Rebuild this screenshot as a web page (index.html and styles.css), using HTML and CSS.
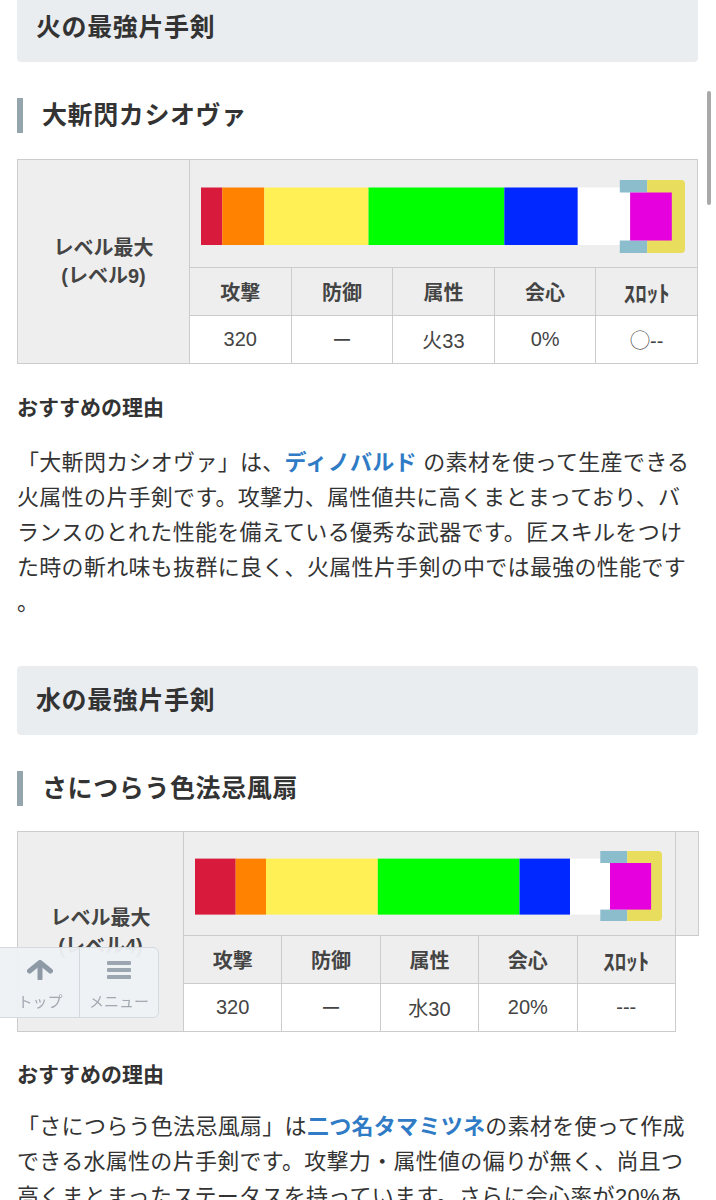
FILE: index.html
```html
<!DOCTYPE html>
<html lang="ja">
<head>
<meta charset="utf-8">
<title>最強片手剣</title>
<link rel="stylesheet" href="styles.css">
</head>
<body>
<main class="page">
  <h2 class="sec-title sec-first">火の最強片手剣</h2>
  <h3 class="weapon-title">大斬閃カシオヴァ</h3>
  <table class="spec">
    <colgroup><col class="c-level-a"><col span="5"></colgroup>
    <tr class="row-bar">
      <th rowspan="3" class="level">レベル最大<br>(レベル9)</th>
      <td colspan="5" class="bar-cell bar-a">
        <svg class="sharp" width="484" height="73" viewBox="0 0 484 73">
          <rect x="0" y="7.5" width="21.2" height="57.5" fill="#d81b3c"/>
          <rect x="21.2" y="7.5" width="42.1" height="57.5" fill="#ff8200"/>
          <rect x="63.3" y="7.5" width="104.2" height="57.5" fill="#fff056"/>
          <rect x="167.5" y="7.5" width="135.8" height="57.5" fill="#00ff00"/>
          <rect x="303.3" y="7.5" width="73.5" height="57.5" fill="#0028ff"/>
          <rect x="376.8" y="7.5" width="52.3" height="57.5" fill="#ffffff"/>
          <rect x="418.8" y="0" width="27.4" height="12.5" fill="#8bbdcd"/>
          <rect x="418.8" y="60.5" width="27.4" height="12.5" fill="#8bbdcd"/>
          <path d="M446.2 0 H480 Q484 0 484 4 V69 Q484 73 480 73 H446.2 Z" fill="#e9dd5d"/>
          <rect x="429.1" y="12.5" width="41.7" height="48" fill="#e600de"/>
        </svg>
      </td>
    </tr>
    <tr class="row-head"><th>攻撃</th><th>防御</th><th>属性</th><th>会心</th><th class="slot">ｽﾛｯﾄ</th></tr>
    <tr class="row-data"><td>320</td><td>ー</td><td>火33</td><td>0%</td><td>◯--</td></tr>
  </table>
  <h4 class="reason">おすすめの理由</h4>
  <p class="desc">「大斬閃カシオヴァ」は、<a class="link" href="#">ディノバルド</a> の素材を使って生産できる火属性の片手剣です。攻撃力、属性値共に高くまとまっており、バランスのとれた性能を備えている優秀な武器です。匠スキルをつけた時の斬れ味も抜群に良く、火属性片手剣の中では最強の性能です。</p>

  <h2 class="sec-title">水の最強片手剣</h2>
  <h3 class="weapon-title">さにつらう色法忌風扇</h3>
  <table class="spec spec-b">
    <colgroup><col class="c-level-b"><col class="c-stat-b" span="5"><col class="c-end"></colgroup>
    <tr class="row-bar">
      <th rowspan="3" class="level">レベル最大<br>(レベル4)</th>
      <td colspan="5" class="bar-cell bar-b">
        <svg class="sharp" width="467" height="70" viewBox="0 0 467 70">
          <rect x="0" y="7.6" width="40.7" height="56" fill="#d81b3c"/>
          <rect x="40.7" y="7.6" width="30.3" height="56" fill="#ff8200"/>
          <rect x="71" y="7.6" width="111.8" height="56" fill="#fff056"/>
          <rect x="182.8" y="7.6" width="141.7" height="56" fill="#00ff00"/>
          <rect x="324.5" y="7.6" width="50.5" height="56" fill="#0028ff"/>
          <rect x="375" y="7.6" width="40" height="56" fill="#ffffff"/>
          <rect x="405.3" y="0" width="27" height="12" fill="#8bbdcd"/>
          <rect x="405.3" y="58.6" width="27" height="11.4" fill="#8bbdcd"/>
          <path d="M432.3 0 H463 Q467 0 467 4 V66 Q467 70 463 70 H432.3 Z" fill="#e9dd5d"/>
          <rect x="415" y="12" width="41.1" height="46.6" fill="#e600de"/>
        </svg>
      </td>
      <td class="blank"></td>
    </tr>
    <tr class="row-head"><th>攻撃</th><th>防御</th><th>属性</th><th>会心</th><th class="slot">ｽﾛｯﾄ</th></tr>
    <tr class="row-data"><td>320</td><td>ー</td><td>水30</td><td>20%</td><td>---</td></tr>
  </table>
  <h4 class="reason reason-b">おすすめの理由</h4>
  <p class="desc desc-b">「さにつらう色法忌風扇」は<a class="link" href="#">二つ名タマミツネ</a>の素材を使って作成できる水属性の片手剣です。攻撃力・属性値の偏りが無く、尚且つ高くまとまったステータスを持っています。さらに会心率が20%あるため、期待値の高い攻撃を繰り出すことができます。</p>
</main>

<nav class="float-nav">
  <a class="fn-btn fn-top" href="#">
    <svg class="fn-icon" width="28" height="20" viewBox="0 0 28 20">
      <path d="M3.5 11 L14 2.5 L24.5 11" fill="none" stroke="#8e9aa6" stroke-width="5" stroke-linecap="round" stroke-linejoin="round"/>
      <path d="M14 4 V18.5" fill="none" stroke="#8e9aa6" stroke-width="5" stroke-linecap="round"/>
    </svg>
    <span class="fn-label">トップ</span>
  </a>
  <a class="fn-btn fn-menu" href="#">
    <svg class="fn-icon" width="26" height="20" viewBox="0 0 26 20">
      <rect x="1" y="1" width="24" height="4" rx="1" fill="#9ba6b1"/>
      <rect x="1" y="8" width="24" height="4" rx="1" fill="#9ba6b1"/>
      <rect x="1" y="15" width="24" height="4" rx="1" fill="#9ba6b1"/>
    </svg>
    <span class="fn-label">メニュー</span>
  </a>
</nav>
<div class="scroll-ind"></div>
</body>
</html>
```

FILE: styles.css
```css
html, body {
  margin: 0;
  padding: 0;
  background: #fff;
}

body {
  font-family: "Liberation Sans", "Noto Sans CJK JP", sans-serif;
  color: #333;
}

.page {
  display: flow-root;
  padding: 0 18px 0 17px;
}

.sec-title {
  margin: 46px 0 0;
  height: 69px;
  line-height: 69px;
  padding: 0 19px;
  font-size: 25px;
  font-weight: 700;
  letter-spacing: 0.6px;
  background: #eaedf0;
  border-radius: 4px;
  color: #333;
}

.sec-first {
  margin-top: -7px;
}

.weapon-title {
  margin: 36px 0 0;
  height: 35px;
  line-height: 35px;
  padding-left: 19px;
  border-left: 6px solid #95a5ae;
  font-size: 25px;
  font-weight: 700;
  letter-spacing: 0.6px;
  color: #333;
}

.spec {
  width: 100%;
  margin-top: 26px;
  border-collapse: collapse;
  table-layout: fixed;
}

.spec-b {
  margin-top: 25px;
}

.c-level-a { width: 172px; }
.c-level-b { width: 166px; }
.c-stat-b { width: 98.4px; }
.c-end { width: 23px; }

.spec th,
.spec td {
  border: 1px solid #cccccc;
  padding: 0;
  text-align: center;
  font-size: 20px;
  color: #444;
}

.level {
  background: #eeeeee;
  font-weight: 700;
  line-height: 28px;
}

.bar-cell {
  background: #eeeeee;
  text-align: left !important;
}

.bar-a {
  padding: 20px 14px 14px 11px !important;
}

.bar-b {
  padding: 19px 14px 14px 11px !important;
}

.sharp {
  display: block;
}

.blank {
  background: #eeeeee;
}

.row-head th {
  background: #eeeeee;
  height: 47px;
  font-weight: 700;
}

.row-data td {
  background: #fff;
  height: 47px;
  font-weight: 400;
}

.spec .slot {
  font-size: 23px;
}

.reason {
  margin: 29px 0 0;
  font-size: 21px;
  line-height: 30px;
  font-weight: 700;
  color: #333;
}

.reason-b {
  margin-top: 28px;
}

.desc {
  margin: 22px 0 0;
  font-size: 22px;
  line-height: 35px;
  letter-spacing: 0.3px;
  line-break: anywhere;
  color: #333;
}

.desc-b {
  margin-top: 19px;
}

.link {
  color: #2f7bc5;
  font-weight: 700;
  text-decoration: none;
}

.float-nav {
  position: fixed;
  left: -6px;
  top: 947px;
  height: 69px;
  display: flex;
  background: rgba(238, 241, 245, 0.96);
  border: 1px solid #d3d9df;
  border-radius: 6px;
}

.fn-btn {
  box-sizing: border-box;
  display: flex;
  flex-direction: column;
  align-items: center;
  padding-top: 12px;
  text-decoration: none;
}

.fn-top {
  width: 84px;
  padding-left: 6px;
}

.fn-menu {
  width: 79px;
  border-left: 1px solid #d3d9df;
}

.fn-icon {
  display: block;
}

.fn-label {
  margin-top: 12px;
  font-size: 15px;
  line-height: 20px;
  color: #a2a9b0;
}

.scroll-ind {
  position: fixed;
  right: 5px;
  top: 91px;
  width: 4px;
  height: 114px;
  border-radius: 2px;
  background: #a9a9a9;
}
```
